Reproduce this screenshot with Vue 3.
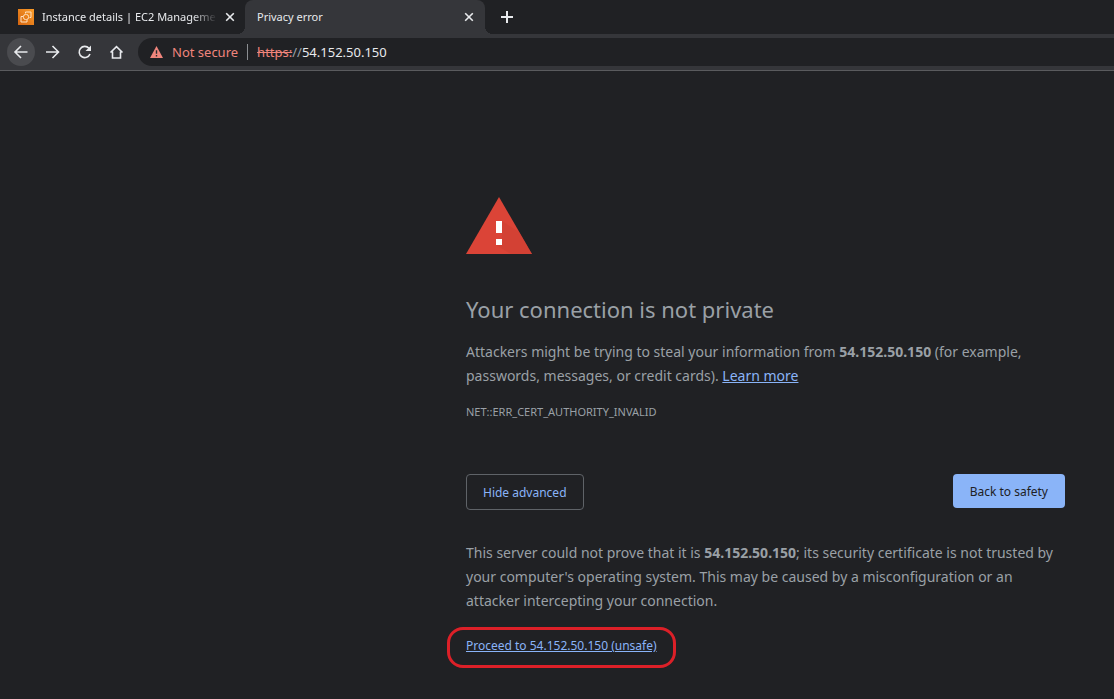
<script setup>
import { ref } from 'vue'

const host = ref('54.152.50.150')
</script>

<template>
  <div class="browser">
    <header>
      <div class="tabs" role="tablist">
        <div class="tab first" role="tab" aria-selected="false">
          <svg class="favicon" width="16" height="16" viewBox="0 0 16 16" aria-hidden="true">
            <defs>
              <linearGradient id="ec2" x1="0" y1="1" x2="1" y2="0">
                <stop offset="0" stop-color="#d4640f" />
                <stop offset="1" stop-color="#fb9d2a" />
              </linearGradient>
            </defs>
            <rect width="16" height="16" fill="url(#ec2)" />
            <g fill="none" stroke="#ffe3c2" stroke-width="1">
              <path d="M5 7.500H3v5.500h6v-2" />
              <rect x="5.500" y="5.500" width="5" height="5" rx="2" />
              <path d="M7.500 4.500V3h5.500v5.500h-1.500" />
            </g>
          </svg>
          <span class="title faded">Instance details | EC2 Manageme</span>
          <button class="close" type="button" aria-label="Close Instance details">
            <svg width="10" height="10" viewBox="0 0 10 10"><path d="M1.200 1.200l7.600 7.600M8.800 1.200l-7.600 7.600" /></svg>
          </button>
        </div>
        <div class="tab active" role="tab" aria-selected="true">
          <span class="title">Privacy error</span>
          <button class="close" type="button" aria-label="Close Privacy error">
            <svg width="10" height="10" viewBox="0 0 10 10"><path d="M1.200 1.200l7.600 7.600M8.800 1.200l-7.600 7.600" /></svg>
          </button>
        </div>
        <button class="new-tab" type="button" aria-label="New tab">
          <svg width="12" height="12" viewBox="0 0 12 12"><path d="M6 0v12M0 6h12" /></svg>
        </button>
      </div>
      <div class="toolbar">
        <button class="nav lit" type="button" aria-label="Back">
          <svg width="16" height="16" viewBox="0 0 16 16"><path d="M14.500 8H2.500M8 2L2 8l6 6" /></svg>
        </button>
        <button class="nav" type="button" aria-label="Forward">
          <svg width="16" height="16" viewBox="0 0 16 16"><path d="M1 8h12M7.500 2l6 6-6 6" /></svg>
        </button>
        <button class="nav" type="button" aria-label="Reload">
          <svg width="16" height="16" viewBox="0 0 16 16"><path d="M13 10A5.600 5.600 0 1 1 12 4.300" /><path class="solid" d="M14 1.500v5.500H8.500z" /></svg>
        </button>
        <button class="nav" type="button" aria-label="Home">
          <svg width="16" height="16" viewBox="0 0 16 16"><path d="M1.500 8.500L7.500 2.700l6 5.800M3.500 7.500V14h8V7.500" /></svg>
        </button>
        <form class="address" @submit.prevent>
          <svg class="alert" width="13" height="12" viewBox="0 0 13 12" aria-hidden="true">
            <path d="M6.500 0L13 12H0z" fill="#f0857c" />
            <path d="M6.500 4.200v3.600M6.500 8.900v1.500" stroke="#292a2d" stroke-width="1.400" />
          </svg>
          <span class="insecure">Not secure</span>
          <span class="bar"></span>
          <label for="url"><s>https:</s><span class="slashes">//</span></label>
          <input id="url" v-model="host" type="text" spellcheck="false" />
        </form>
      </div>
    </header>

    <main>
      <article>
        <svg class="warning" width="66" height="57" viewBox="0 0 66 57" role="img" aria-label="Warning">
          <path d="M33 0l33 57H0z" fill="#db4437" />
          <path d="M36 24l17 11 13 22H45L30 48l6-6z" fill="#c93d31" opacity=".45" />
          <path d="M30 24h6v12h-6zM30 42h6v6h-6z" fill="#fff" />
        </svg>
        <h1>Your connection is not private</h1>
        <p>
          Attackers might be trying to steal your information from <strong>{{ host }}</strong> (for example,
          passwords, messages, or credit cards). <a href="#">Learn more</a>
        </p>
        <div class="code">NET::ERR_CERT_AUTHORITY_INVALID</div>
        <div class="actions">
          <button class="secondary" type="button">Hide advanced</button>
          <button class="primary" type="button">Back to safety</button>
        </div>
        <p>
          This server could not prove that it is <strong>{{ host }}</strong>; its security certificate is not
          trusted by your computer's operating system. This may be caused by a misconfiguration or an attacker
          intercepting your connection.
        </p>
        <div class="proceed"><a href="#">Proceed to {{ host }} (unsafe)</a></div>
      </article>
    </main>
  </div>
</template>

<style>
body {
  margin: 0;
  background: #202124;
}
</style>

<style scoped>
.browser {
  min-height: 100vh;
  background: #202124;
  color: #9aa0a6;
  font-family: "Segoe UI", "Noto Sans", "Open Sans", sans-serif;
}
button {
  font-family: inherit;
  padding: 0;
  border: 0;
  background: none;
}
button svg {
  display: block;
  fill: none;
  stroke: #e8eaed;
  stroke-width: 1.600;
}
.tabs {
  display: flex;
  height: 34px;
}
.tab {
  display: flex;
  align-items: center;
  box-sizing: border-box;
  width: 240px;
  padding: 0 11px 0 12px;
  color: #e8eaed;
  font-size: 11px;
  line-height: 16px;
}
.tab.first {
  width: 245px;
  padding: 0 10px 0 18px;
}
.favicon {
  flex: none;
  margin-right: 8px;
}
.title {
  flex: 1;
  overflow: hidden;
  white-space: nowrap;
}
.faded {
  margin-right: 8px;
  mask-image: linear-gradient(to right, #000 86%, transparent);
}
.active {
  position: relative;
  border-radius: 8px 8px 0 0;
  background: #35363a;
}
.active::before,
.active::after {
  content: "";
  position: absolute;
  bottom: 0;
  width: 8px;
  height: 8px;
}
.active::before {
  right: 100%;
  background: radial-gradient(circle at 0 0, transparent 8px, #35363a 8px);
}
.active::after {
  left: 100%;
  background: radial-gradient(circle at 100% 0, transparent 8px, #35363a 8px);
}
.new-tab {
  margin-left: 16px;
}
.new-tab svg {
  stroke-width: 2;
}
.toolbar {
  display: flex;
  align-items: center;
  gap: 4px;
  height: 36px;
  padding-left: 7px;
  background: #35363a;
  border-bottom: 1px solid #5a5b5e;
}
.nav {
  display: grid;
  place-items: center;
  width: 28px;
  height: 28px;
  border-radius: 50%;
}
.lit {
  background: #4a4b4f;
}
.nav .solid {
  fill: #e8eaed;
  stroke: none;
}
.address {
  flex: 1;
  display: flex;
  align-items: center;
  min-width: 0;
  height: 28px;
  margin-left: 3px;
  padding-left: 12px;
  border-radius: 14px 0 0 14px;
  background: #202124;
  font-size: 13px;
}
.insecure {
  margin-left: 9px;
  color: #f0857c;
  white-space: nowrap;
}
.bar {
  width: 1px;
  height: 16px;
  margin: 0 9px;
  background: #8b8e92;
}
.address s {
  color: #f0857c;
}
.slashes {
  color: #9aa0a6;
}
.address input {
  flex: 1;
  min-width: 0;
  padding: 0;
  border: 0;
  outline: 0;
  background: none;
  color: #e8eaed;
  font: inherit;
}
main {
  display: flex;
  justify-content: flex-end;
  padding: 126px 49px 30px;
}
article {
  width: 100%;
  max-width: 599px;
}
.warning {
  display: block;
}
h1 {
  margin: 39px 0 15px;
  font-size: 22px;
  font-weight: 400;
  line-height: 32px;
}
p {
  margin: 0;
  font-size: 14px;
  line-height: 24px;
}
a {
  color: #8ab4f8;
}
.code {
  margin-top: 14px;
  font-size: 11px;
  line-height: 20px;
}
.actions {
  display: flex;
  justify-content: space-between;
  align-items: flex-start;
  margin: 52px 0 31px;
}
.actions button {
  height: 34px;
  padding: 0 17px;
  border-radius: 4px;
  font-size: 12px;
}
.actions .secondary {
  height: 36px;
  padding: 0 16px;
  border: 1px solid #5f6368;
  color: #8ab4f8;
}
.actions .primary {
  background: #8ab4f8;
  color: #202124;
}
.proceed {
  position: relative;
  width: fit-content;
  margin-top: 23px;
  font-size: 12px;
  line-height: 20px;
}
.proceed::after {
  content: "";
  position: absolute;
  inset: -9px -19px -12px;
  border: 3px solid #dc2028;
  border-radius: 16px;
  pointer-events: none;
}
</style>
